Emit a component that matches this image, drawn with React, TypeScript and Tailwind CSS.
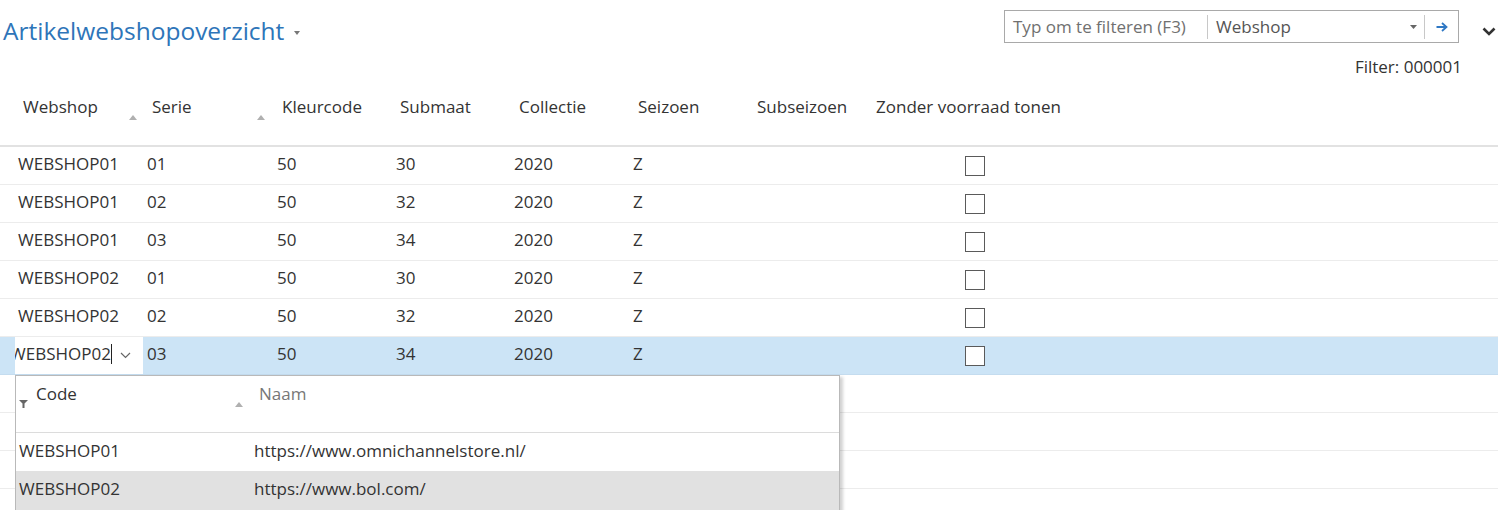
const FONT = "font-['Segoe_UI','Open_Sans',sans-serif]";

type Row = {
  webshop: string;
  serie: string;
  kleur: string;
  submaat: string;
  collectie: string;
  seizoen: string;
};

const ROWS: Row[] = [
  { webshop: "WEBSHOP01", serie: "01", kleur: "50", submaat: "30", collectie: "2020", seizoen: "Z" },
  { webshop: "WEBSHOP01", serie: "02", kleur: "50", submaat: "32", collectie: "2020", seizoen: "Z" },
  { webshop: "WEBSHOP01", serie: "03", kleur: "50", submaat: "34", collectie: "2020", seizoen: "Z" },
  { webshop: "WEBSHOP02", serie: "01", kleur: "50", submaat: "30", collectie: "2020", seizoen: "Z" },
  { webshop: "WEBSHOP02", serie: "02", kleur: "50", submaat: "32", collectie: "2020", seizoen: "Z" },
];

// column widths taken from the grid in the screenshot
const COLS = "grid grid-cols-[143px_130px_119px_118px_119px_119px_119px_1fr]";

function SortArrow() {
  return (
    <svg width="8" height="5" viewBox="0 0 8 5" className="block" aria-hidden>
      <path d="M0 5 L4 0 L8 5 Z" fill="#b0b0b0" />
    </svg>
  );
}

function Checkbox() {
  return <span className="block ml-[94px] w-[20px] h-[20px] border border-[#5a5a5a] bg-white" />;
}

function HeaderRow() {
  const labels = ["Seizoen", "Subseizoen", "Zonder voorraad tonen"];
  return (
    <div className={`${COLS} h-[67px] border-b-2 border-[#e2e2e2] text-[17px] text-[#333]`}>
      <div className="relative pl-[23px] pt-[14px]">
        Webshop
        <span className="absolute left-[129px] top-[35px]">
          <SortArrow />
        </span>
      </div>
      <div className="relative pl-[9px] pt-[14px]">
        Serie
        <span className="absolute left-[114px] top-[35px]">
          <SortArrow />
        </span>
      </div>
      <div className="pl-[9px] pt-[14px]">Kleurcode</div>
      <div className="pl-[8px] pt-[14px]">Submaat</div>
      <div className="pl-[9px] pt-[14px]">Collectie</div>
      {labels.map((l) => (
        <div key={l} className="pl-[9px] pt-[14px] whitespace-nowrap">
          {l}
        </div>
      ))}
    </div>
  );
}

function DataRow({ row }: { row: Row }) {
  return (
    <div className={`${COLS} h-[38px] items-center pb-[3px] border-b border-[#ececec] text-[17px] text-[#333]`}>
      <div className="pl-[18px]">{row.webshop}</div>
      <div className="pl-[4px]">{row.serie}</div>
      <div className="pl-[4px]">{row.kleur}</div>
      <div className="pl-[4px]">{row.submaat}</div>
      <div className="pl-[4px]">{row.collectie}</div>
      <div className="pl-[4px]">{row.seizoen}</div>
      <div />
      <div className="pl-[4px] pt-[3px]">
        <Checkbox />
      </div>
    </div>
  );
}

function SelectedRow() {
  return (
    <div className={`${COLS} h-[38px] items-center bg-[#cce4f6] border-b border-[#c4dcef] text-[17px] text-[#333]`}>
      <div className="h-full pl-[15px]">
        <div className="h-full bg-white flex items-center overflow-hidden pb-[3px]">
          <span className="-ml-[5px] whitespace-nowrap">WEBSHOP02</span>
          <span className="w-px h-[20px] bg-[#222]" />
          <svg width="11" height="7" viewBox="0 0 11 7" className="ml-[8px] mt-[3px] shrink-0" aria-hidden>
            <path d="M1 1 L5.5 5.5 L10 1" stroke="#666" strokeWidth="1.2" fill="none" />
          </svg>
        </div>
      </div>
      <div className="pl-[4px] pb-[3px]">03</div>
      <div className="pl-[4px] pb-[3px]">50</div>
      <div className="pl-[4px] pb-[3px]">34</div>
      <div className="pl-[4px] pb-[3px]">2020</div>
      <div className="pl-[4px] pb-[3px]">Z</div>
      <div />
      <div className="pl-[4px]">
        <Checkbox />
      </div>
    </div>
  );
}

function Lookup() {
  return (
    <div className="absolute left-[15px] top-[375px] w-[825px] h-[160px] bg-white border border-[#b9b9b9] shadow-[3px_2px_3px_rgba(0,0,0,0.18)] text-[17px]">
      <div className="relative h-[57px] border-b border-[#dcdcdc]">
        <svg width="9" height="8" viewBox="0 0 9 8" className="absolute left-[3px] top-[24px]" aria-hidden>
          <path d="M0 0 H9 L5.5 3.5 V8 H3.5 V3.5 Z" fill="#666" />
        </svg>
        <span className="absolute left-[20px] top-[5px] text-[#333]">Code</span>
        <span className="absolute left-[219px] top-[26px]">
          <SortArrow />
        </span>
        <span className="absolute left-[243px] top-[5px] text-[#777]">Naam</span>
      </div>
      <div className="flex h-[38px] items-center pb-[2px] text-[#333]">
        <span className="w-[238px] pl-[3px]">WEBSHOP01</span>
        <span>https://www.omnichannelstore.nl/</span>
      </div>
      <div className="flex h-[40px] items-center pb-[4px] bg-[#e1e1e1] text-[#333]">
        <span className="w-[238px] pl-[3px]">WEBSHOP02</span>
        <span>https://www.bol.com/</span>
      </div>
    </div>
  );
}

function FilterBox() {
  return (
    <div className="flex items-center">
      <div className="flex items-center w-[455px] h-[33px] border border-[#a9a9a9] bg-white text-[17px]">
        <span className="w-[202px] pl-[8px] text-[#707070] whitespace-nowrap">Typ om te filteren (F3)</span>
        <span className="w-px h-[24px] bg-[#c8c8c8]" />
        <span className="flex-1 pl-[8px] text-[#555]">Webshop</span>
        <svg width="7" height="4" viewBox="0 0 7 4" className="mr-[7px]" aria-hidden>
          <path d="M0 0 H7 L3.5 4 Z" fill="#666" />
        </svg>
        <span className="w-px h-[24px] bg-[#c8c8c8]" />
        <span className="w-[33px] flex justify-center">
          <svg width="12" height="10" viewBox="0 0 12 10" aria-hidden>
            <path d="M0.5 5 H10 M6 1 L10.5 5 L6 9" stroke="#2f78c4" strokeWidth="1.8" fill="none" />
          </svg>
        </span>
      </div>
      <svg width="14" height="9" viewBox="0 0 14 9" className="ml-[23px] mt-[9px]" aria-hidden>
        <path d="M1.5 1.5 L7 7 L12.5 1.5" stroke="#333" strokeWidth="2.6" fill="none" />
      </svg>
    </div>
  );
}

export default function App() {
  return (
    <div className={`relative w-[1498px] h-[510px] overflow-hidden bg-white ${FONT}`}>
      <div className="flex justify-between h-[80px]">
        <div className="flex items-center self-start pl-[3px] pt-[14px]">
          <h1 className="text-[24.5px] leading-[34px] text-[#2e75b9] whitespace-nowrap">Artikelwebshopoverzicht</h1>
          <svg width="6" height="4" viewBox="0 0 6 4" className="ml-[10px] mt-[4px]" aria-hidden>
            <path d="M0 0 H6 L3 4 Z" fill="#777" />
          </svg>
        </div>
        <div className="flex flex-col items-end pt-[10px] pr-[2px]">
          <FilterBox />
          <div className="mr-[34px] mt-[11px] text-[17px] text-[#333]">Filter: 000001</div>
        </div>
      </div>

      <HeaderRow />
      {ROWS.map((r, i) => (
        <DataRow key={i} row={r} />
      ))}
      <SelectedRow />
      {[0, 1, 2].map((i) => (
        <div key={i} className="h-[38px] border-b border-[#ececec]" />
      ))}

      <Lookup />
    </div>
  );
}
